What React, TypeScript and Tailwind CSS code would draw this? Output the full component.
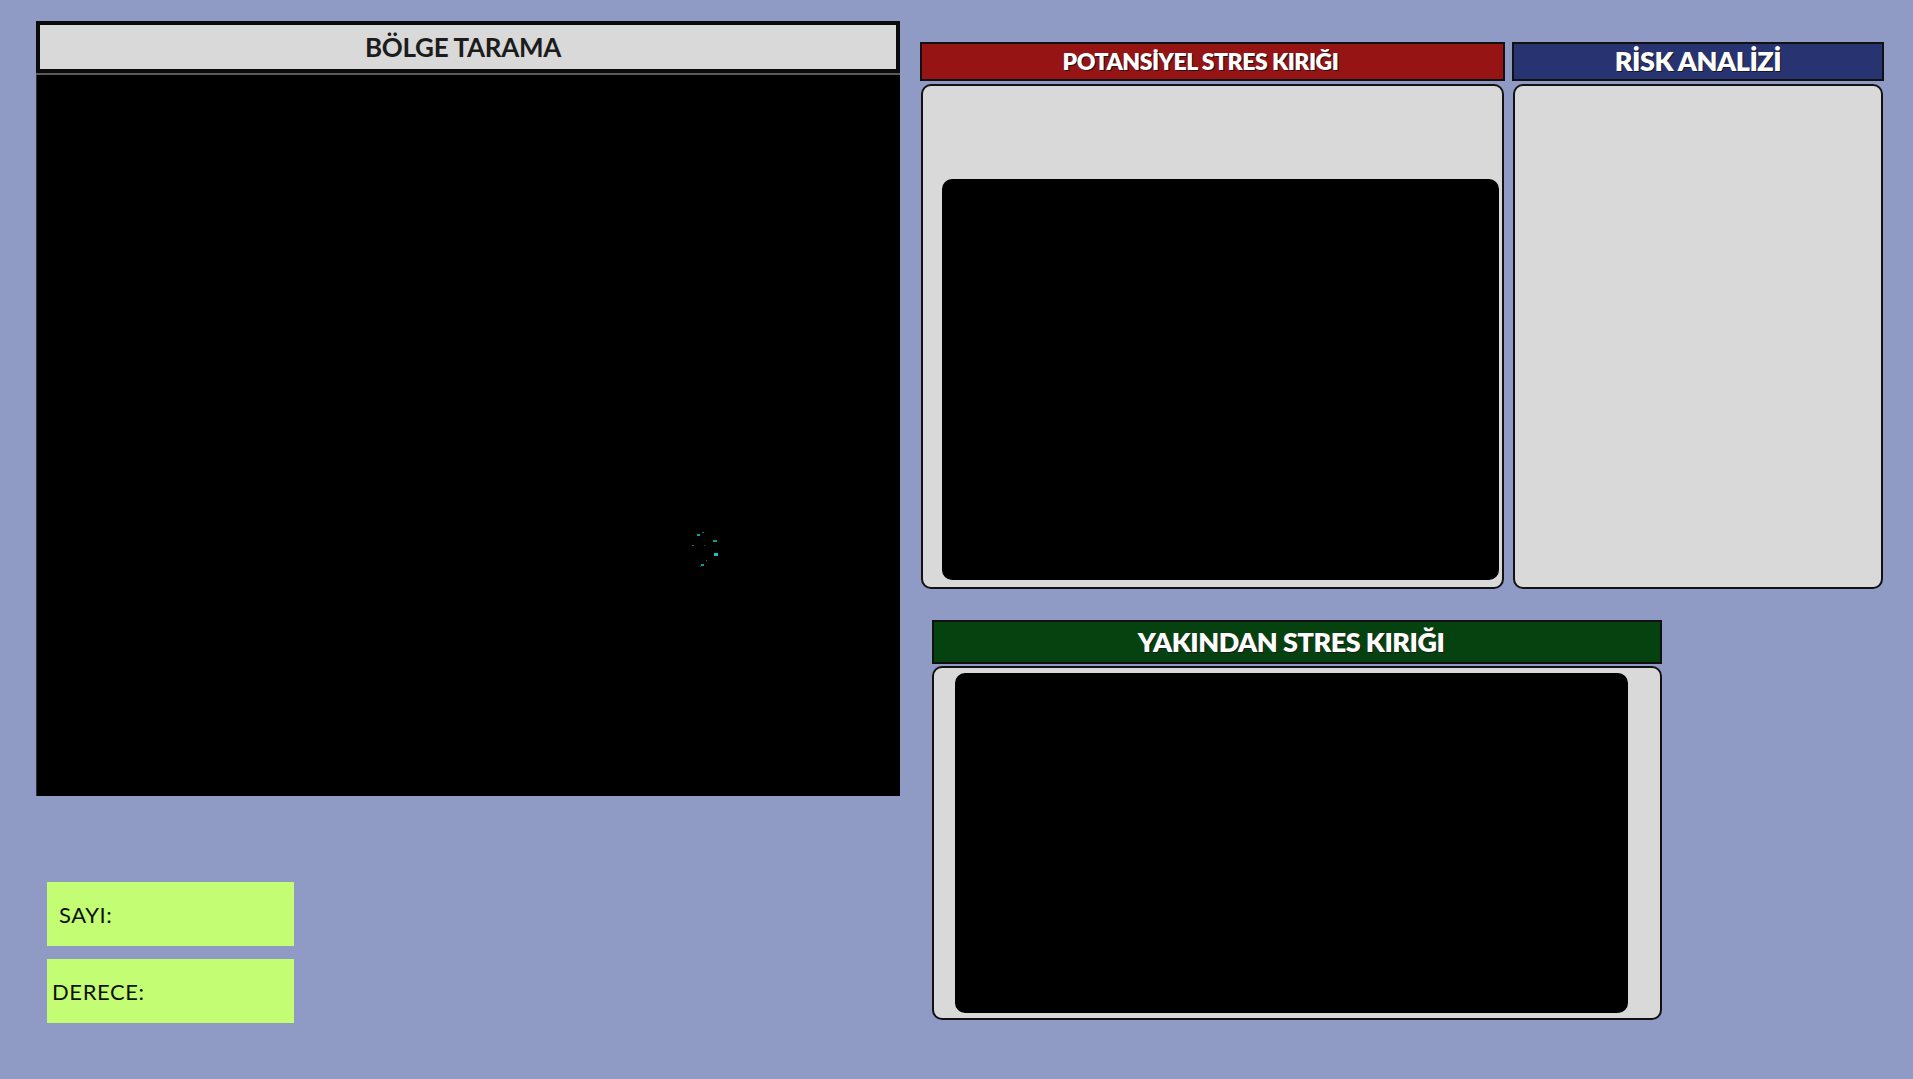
import React from "react";

const dots = [
  { x: 660, y: 459, w: 3, h: 2, c: "#0fa3a3" },
  { x: 665, y: 457, w: 2, h: 1, c: "#0b6f6f" },
  { x: 676, y: 465, w: 4, h: 2, c: "#0e9b9b" },
  { x: 655, y: 470, w: 2, h: 1, c: "#0b7a7a" },
  { x: 667, y: 470, w: 1, h: 1, c: "#0a5a5a" },
  { x: 677, y: 478, w: 4, h: 3, c: "#12c6c6" },
  { x: 669, y: 485, w: 1, h: 1, c: "#0a6a4a" },
  { x: 664, y: 489, w: 3, h: 2, c: "#0e9a9a" },
  { x: 663, y: 491, w: 1, h: 1, c: "#0b6f6f" },
];

function ColorHeader({ title, bg, className }: { title: string; bg: string; className: string }) {
  return (
    <div
      className={`flex items-center justify-center border-2 border-[#111] ${bg} ${className} font-['Lato',sans-serif] font-extrabold text-white tracking-[-0.5px] [text-shadow:1px_1px_0_#1a1a1a]`}
    >
      {title}
    </div>
  );
}

export default function App() {
  return (
    <div className="w-[1913px] h-[1079px] bg-[#8f9ac5] flex overflow-hidden font-['Lato',sans-serif]">
      {/* Left: scan area */}
      <div className="ml-[36px] mt-[21px] w-[864px] flex flex-col">
        <div className="h-[52px] border-4 border-[#0a0a0a] bg-[#d9d9d9] flex items-center justify-center pr-[10px] text-[26px] font-bold text-[#1c1c1c] tracking-[-0.3px]">
          BÖLGE TARAMA
        </div>
        <div className="h-[2px] bg-[#5a5a5a]" />
        <div className="relative h-[721px] bg-black border-l border-[#2a2d3a]">
          {dots.map((d, i) => (
            <div
              key={i}
              className="absolute"
              style={{ left: d.x, top: d.y, width: d.w, height: d.h, background: d.c }}
            />
          ))}
        </div>

        <div className="mt-[86px] ml-[11px] flex flex-col gap-[13px]">
          <div className="w-[247px] h-[64px] bg-[#c2fd74] flex items-center pl-[12px] text-[22px] tracking-[0.6px] text-[#111]">
            SAYI:
          </div>
          <div className="w-[247px] h-[64px] bg-[#c2fd74] flex items-center pl-[5px] text-[22px] tracking-[0.6px] text-[#111]">
            DERECE:
          </div>
        </div>
      </div>

      {/* Right side */}
      <div className="ml-[20px] mt-[42px] flex flex-col">
        <div className="flex gap-[7px]">
          <div className="w-[585px] flex flex-col">
            <ColorHeader title="POTANSİYEL STRES KIRIĞI" bg="bg-[#971414]" className="h-[39px] text-[23px] pr-[24px]" />
            <div className="mt-[3px] mx-[1px] h-[505px] rounded-[10px] border-2 border-[#111] bg-[#d9d9d9] pt-[93px] pl-[19px] pr-[3px] pb-[7px]">
              <div className="h-full rounded-[10px] bg-black" />
            </div>
          </div>
          <div className="w-[372px] flex flex-col">
            <ColorHeader title="RİSK ANALİZİ" bg="bg-[#283371]" className="h-[39px] text-[27px]" />
            <div className="mt-[3px] mx-[1px] h-[505px] rounded-[10px] border-2 border-[#111] bg-[#d9d9d9]" />
          </div>
        </div>

        <div className="mt-[31px] ml-[12px] w-[730px] flex flex-col">
          <ColorHeader title="YAKINDAN STRES KIRIĞI" bg="bg-[#06420f]" className="h-[44px] text-[27px] pr-[12px]" />
          <div className="mt-[2px] h-[354px] rounded-[10px] border-2 border-[#111] bg-[#d9d9d9] pt-[5px] pb-[5px] pl-[21px] pr-[32px]">
            <div className="h-full rounded-[10px] bg-black" />
          </div>
        </div>
      </div>
    </div>
  );
}
